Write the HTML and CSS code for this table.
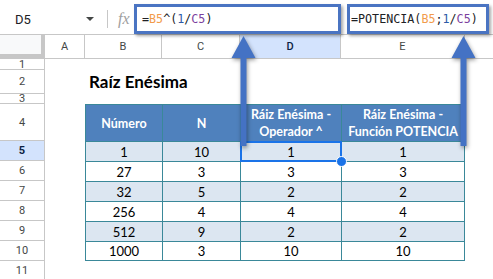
FILE: index.html
```html
<!DOCTYPE html>
<html lang="es">
<head>
<meta charset="utf-8">
<title>Raíz Enésima</title>
<link rel="stylesheet" href="styles.css">
</head>
<body>
<div class="app">
  <div class="fbar">
    <div class="namebox">D5</div>
    <span class="caret"></span>
    <span class="sep"></span>
    <span class="fx">fx</span>
    <div class="formula">=<span class="r1">B5</span>^(<span class="num">1</span>/<span class="r2">C5</span>)</div>
  </div>

  <div class="sheet">
    <div class="corner"></div>
    <div class="ch">A</div>
    <div class="ch">B</div>
    <div class="ch">C</div>
    <div class="ch ch-sel">D</div>
    <div class="ch">E</div>
    <div class="ch ch-rest"></div>

    <div class="rh">1</div>
    <div class="rh">2</div>
    <div class="rh">3</div>
    <div class="rh">4</div>
    <div class="rh rh-sel">5</div>
    <div class="rh">6</div>
    <div class="rh">7</div>
    <div class="rh">8</div>
    <div class="rh">9</div>
    <div class="rh">10</div>
    <div class="rh">11</div>

    <div class="title">Raíz Enésima</div>

    <div class="tbl">
      <div class="tc th">Número</div>
      <div class="tc th">N</div>
      <div class="tc th">Ráiz Enésima -<br>Operador ^</div>
      <div class="tc th last">Ráiz Enésima -<br>Función POTENCIA</div>

      <div class="tc alt">1</div>
      <div class="tc alt">10</div>
      <div class="tc alt sel">1</div>
      <div class="tc alt last">1</div>

      <div class="tc">27</div>
      <div class="tc">3</div>
      <div class="tc">3</div>
      <div class="tc last">3</div>

      <div class="tc alt">32</div>
      <div class="tc alt">5</div>
      <div class="tc alt">2</div>
      <div class="tc alt last">2</div>

      <div class="tc">256</div>
      <div class="tc">4</div>
      <div class="tc">4</div>
      <div class="tc last">4</div>

      <div class="tc alt">512</div>
      <div class="tc alt">9</div>
      <div class="tc alt">2</div>
      <div class="tc alt last">2</div>

      <div class="tc bot">1000</div>
      <div class="tc bot">3</div>
      <div class="tc bot">10</div>
      <div class="tc bot last">10</div>
    </div>
  </div>

  <div class="callout callout-1"></div>
  <div class="callout callout-2">=POTENCIA(<span class="r1">B5</span>;<span class="num">1</span>/<span class="r2">C5</span>)</div>

  <svg class="arrow arrow-1" width="30" height="116" viewBox="0 0 30 116">
    <polygon points="14.5,2 26.5,24 17.5,24 17.5,112 11.5,112 11.5,24 2.5,24"/>
  </svg>
  <svg class="arrow arrow-2" width="30" height="116" viewBox="0 0 30 116">
    <polygon points="14.5,2 26.5,24 17.5,24 17.5,112 11.5,112 11.5,24 2.5,24"/>
  </svg>
</div>
</body>
</html>
```

FILE: styles.css
```css
* { box-sizing: border-box; }

html, body {
  margin: 0;
  padding: 0;
  background: #fff;
}

.app {
  position: relative;
  width: 493px;
  height: 279px;
  overflow: hidden;
  font-family: Roboto, "Liberation Sans", sans-serif;
  color: #202124;
}

/* formula bar */
.fbar {
  display: flex;
  align-items: center;
  height: 35px;
  padding-top: 4px;
  border-bottom: 1px solid #c7c7c7;
  background: #fff;
}

.namebox {
  width: 86px;
  padding-left: 15px;
  font-size: 13px;
  color: #202124;
}

.caret {
  width: 0;
  height: 0;
  border-left: 4px solid transparent;
  border-right: 4px solid transparent;
  border-top: 4px solid #444746;
}

.sep {
  width: 1px;
  height: 18px;
  margin-left: 13px;
  background: #c7c7c7;
}

.fx {
  margin-left: 10px;
  width: 14px;
  font-family: "Liberation Serif", serif;
  font-style: italic;
  font-size: 16px;
  color: #a0a0a0;
}

.formula {
  margin-left: 10px;
  font-family: "DejaVu Sans Mono", monospace;
  font-size: 11.7px;
  color: #202124;
  white-space: nowrap;
}

.r1 { color: #f29b4b; }
.r2 { color: #7b3f9e; }
.num { color: #2d5aa6; }

/* sheet grid */
.sheet {
  display: grid;
  grid-template-columns: 45px 40px 77px 78px 101px 124px 1fr;
  grid-template-rows: 24px 11px 24px 10px 37px repeat(7, 20px);
}

.corner {
  background: #f8f9fa;
  border-right: 4px solid #c7c7c7;
  border-bottom: 5px solid #c7c7c7;
}

.ch {
  display: flex;
  align-items: center;
  justify-content: center;
  font-size: 11px;
  color: #444746;
  border-right: 1px solid #c7c7c7;
  border-bottom: 1px solid #c7c7c7;
}

.ch-sel {
  background: #d3e3fd;
  color: #0b1f44;
  font-weight: 500;
}

.ch-rest { border-right: none; }

.rh {
  grid-column: 1;
  display: flex;
  align-items: center;
  justify-content: center;
  overflow: hidden;
  font-size: 11px;
  line-height: 11px;
  color: #444746;
  border-right: 1px solid #c7c7c7;
  border-bottom: 1px solid #c7c7c7;
}

.rh-sel {
  background: #d3e3fd;
  color: #0b1f44;
  font-weight: 700;
}

.title {
  grid-column: 3 / 6;
  grid-row: 3;
  padding-left: 4px;
  font-family: Lato, "Liberation Sans", sans-serif;
  font-weight: 700;
  font-size: 17px;
  line-height: 24px;
  color: #000;
  white-space: nowrap;
}

/* data table */
.tbl {
  grid-column: 3 / 7;
  grid-row: 5 / 12;
  display: grid;
  grid-template-columns: 77px 78px 101px 124px;
  grid-template-rows: 37px repeat(6, 20px);
  font-family: Lato, "Liberation Sans", sans-serif;
  font-size: 13px;
  color: #000;
}

.tc {
  display: flex;
  align-items: center;
  justify-content: center;
  text-align: center;
  white-space: nowrap;
  border-left: 1px solid #3a8899;
  border-top: 1px solid #3a8899;
  background: #fff;
}

.tc.last { border-right: 1px solid #3a8899; }
.tc.bot { border-bottom: 1px solid #3a8899; }

.th {
  background: #4f81bd;
  color: #fff;
  font-weight: 700;
  font-size: 12.5px;
  line-height: 17px;
}

.alt { background: #dce6f1; }

.sel { position: relative; }

.sel::before {
  content: "";
  position: absolute;
  left: -1px;
  top: -1px;
  right: -1px;
  bottom: -1px;
  border: 2px solid #1a73e8;
}

.sel::after {
  content: "";
  position: absolute;
  right: -6px;
  bottom: -6px;
  width: 9px;
  height: 9px;
  border-radius: 50%;
  background: #1a73e8;
  border: 1px solid #fff;
}

/* annotations */
.callout {
  position: absolute;
  top: 4px;
  height: 30px;
  border: 3px solid #4a74c2;
  box-shadow: 2px 2px 3px rgba(0, 0, 0, 0.35);
}

.callout-1 {
  left: 134px;
  width: 207px;
}

.callout-2 {
  left: 347px;
  width: 142px;
  background: #fff;
  padding-left: 1px;
  font-family: "DejaVu Sans Mono", monospace;
  font-size: 11.7px;
  line-height: 24px;
  color: #202124;
  white-space: nowrap;
}

.arrow {
  position: absolute;
  top: 34px;
  fill: #4472c4;
  filter: drop-shadow(1px 2px 2px rgba(0, 0, 0, 0.4));
}

.arrow-1 { left: 229px; }
.arrow-2 { left: 449px; }
```
